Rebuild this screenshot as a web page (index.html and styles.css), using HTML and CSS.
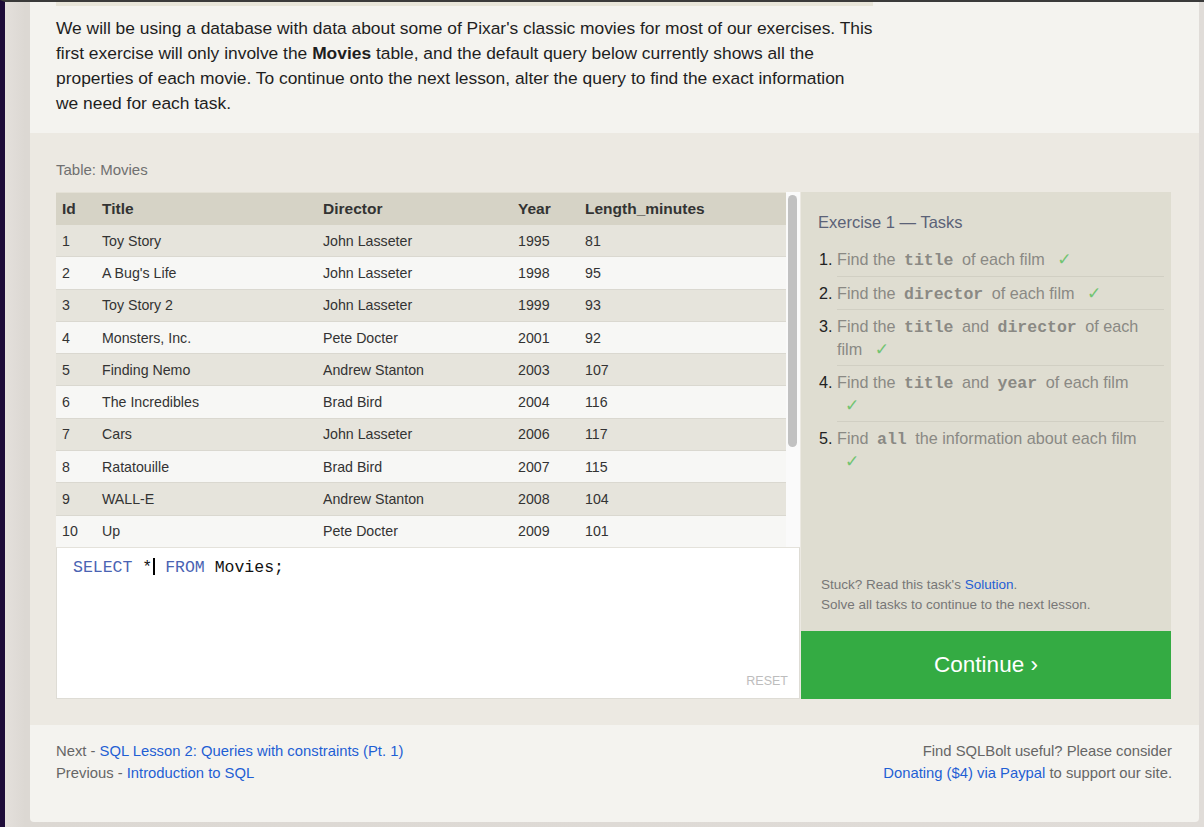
FILE: index.html
```html
<!DOCTYPE html>
<html lang="en">
<head>
<meta charset="utf-8">
<title>SQLBolt - Lesson 1</title>
<link rel="stylesheet" href="styles.css">
</head>
<body>
<div class="card">
  <section class="intro">
    <div class="strip"></div>
    <p class="lead">We will be using a database with data about some of Pixar's classic movies for most of our exercises. This<br>first exercise will only involve the <strong>Movies</strong> table, and the default query below currently shows all the<br>properties of each movie. To continue onto the next lesson, alter the query to find the exact information<br>we need for each task.</p>
  </section>

  <section class="exercise">
    <div class="table-label">Table: Movies</div>
    <div class="workspace">
      <div class="left-col">
        <div class="table-wrap">
          <div class="table-scroll">
            <table class="movies">
              <thead>
                <tr><th class="c-id">Id</th><th class="c-title">Title</th><th class="c-dir">Director</th><th class="c-year">Year</th><th class="c-len">Length_minutes</th></tr>
              </thead>
              <tbody>
                <tr><td>1</td><td>Toy Story</td><td>John Lasseter</td><td>1995</td><td>81</td></tr>
                <tr><td>2</td><td>A Bug's Life</td><td>John Lasseter</td><td>1998</td><td>95</td></tr>
                <tr><td>3</td><td>Toy Story 2</td><td>John Lasseter</td><td>1999</td><td>93</td></tr>
                <tr><td>4</td><td>Monsters, Inc.</td><td>Pete Docter</td><td>2001</td><td>92</td></tr>
                <tr><td>5</td><td>Finding Nemo</td><td>Andrew Stanton</td><td>2003</td><td>107</td></tr>
                <tr><td>6</td><td>The Incredibles</td><td>Brad Bird</td><td>2004</td><td>116</td></tr>
                <tr><td>7</td><td>Cars</td><td>John Lasseter</td><td>2006</td><td>117</td></tr>
                <tr><td>8</td><td>Ratatouille</td><td>Brad Bird</td><td>2007</td><td>115</td></tr>
                <tr><td>9</td><td>WALL-E</td><td>Andrew Stanton</td><td>2008</td><td>104</td></tr>
                <tr><td>10</td><td>Up</td><td>Pete Docter</td><td>2009</td><td>101</td></tr>
                <tr><td>11</td><td>Toy Story 3</td><td>Lee Unkrich</td><td>2010</td><td>103</td></tr>
                <tr><td>12</td><td>Cars 2</td><td>John Lasseter</td><td>2011</td><td>120</td></tr>
                <tr><td>13</td><td>Brave</td><td>Brenda Chapman</td><td>2012</td><td>102</td></tr>
                <tr><td>14</td><td>Monsters University</td><td>Dan Scanlon</td><td>2013</td><td>110</td></tr>
              </tbody>
            </table>
          </div>
          <div class="scrollbar"><div class="thumb"></div></div>
        </div>
        <div class="editor">
          <div class="code"><span class="kw">SELECT</span> *<span class="cursor"></span> <span class="kw">FROM</span> Movies;</div>
          <div class="reset">RESET</div>
        </div>
      </div>
      <div class="right-col">
        <div class="tasks">
          <h3 class="tasks-title">Exercise 1 — Tasks</h3>
          <ol class="task-list">
            <li>Find the <code>title</code> of each film <span class="check">✓</span></li>
            <li>Find the <code>director</code> of each film <span class="check">✓</span></li>
            <li>Find the <code>title</code> and <code>director</code> of each film <span class="check">✓</span></li>
            <li>Find the <code>title</code> and <code>year</code> of each film <span class="check">✓</span></li>
            <li>Find <code>all</code> the information about each film <span class="check">✓</span></li>
          </ol>
          <div class="stuck">Stuck? Read this task's <a href="#">Solution</a>.<br>Solve all tasks to continue to the next lesson.</div>
        </div>
        <a class="continue" href="#">Continue ›</a>
      </div>
    </div>
  </section>

  <footer class="foot">
    <div class="nav">
      <div>Next - <a href="#">SQL Lesson 2: Queries with constraints (Pt. 1)</a></div>
      <div>Previous - <a href="#">Introduction to SQL</a></div>
    </div>
    <div class="support">
      <div>Find SQLBolt useful? Please consider</div>
      <div><a href="#">Donating ($4) via Paypal</a> to support our site.</div>
    </div>
  </footer>
</div>
</body>
</html>
```

FILE: styles.css
```css
html, body {
  margin: 0;
  padding: 0;
}

body {
  min-height: 100vh;
  box-sizing: border-box;
  background: linear-gradient(to right, #e6e2de 0, #dcd8d3 25px, #e0dcd8 100%);
  border-left: 5px solid #1e0c39;
  border-top: 2px solid #3a3a3a;
  padding: 0 5px 5px 25px;
  font-family: "Liberation Sans", Arial, sans-serif;
  color: #222;
}

a {
  color: #1f5fd4;
  text-decoration: none;
}

.card {
  background: #f4f3ef;
  border-radius: 0 0 4px 4px;
  overflow: hidden;
}

/* intro */
.intro {
  padding: 0 26px 17px;
}

.strip {
  width: 817px;
  height: 4px;
  background: #e8e5d9;
  margin-bottom: 10px;
}

.lead {
  margin: 0;
  width: 860px;
  font-size: 17.4px;
  line-height: 25px;
  color: #1e1e1e;
}

/* exercise */
.exercise {
  background: #ece9e2;
  padding: 27px 28px 26px 26px;
}

.table-label {
  font-size: 15px;
  line-height: 20px;
  color: #707070;
  margin-bottom: 12px;
}

.workspace {
  display: flex;
  gap: 1px;
  height: 507px;
}

.left-col {
  width: 744px;
  display: flex;
  flex-direction: column;
}

.table-wrap {
  height: 355px;
  display: flex;
  background: #fafafa;
}

.table-scroll {
  width: 730px;
  overflow: hidden;
}

.movies {
  width: 730px;
  border-collapse: separate;
  border-spacing: 0;
  table-layout: fixed;
  font-size: 14.2px;
  color: #333;
}

.movies th {
  background: #d6d3c6;
  text-align: left;
  font-weight: bold;
  font-size: 15.5px;
  height: 32px;
  padding: 0 6px;
  border-top: 1px solid #e4e1d6;
  color: #333;
}

.movies td {
  height: 31.3px;
  padding: 0 6px;
  border-bottom: 1px solid #dad8d0;
}

.movies tbody tr:nth-child(odd) td {
  background: #e6e4dc;
}

.movies tbody tr:nth-child(even) td {
  background: #f7f7f5;
}

.c-id { width: 28px; }
.c-title { width: 209px; }
.c-dir { width: 183px; }
.c-year { width: 55px; }
.c-len { width: 195px; }

.scrollbar {
  width: 9px;
  padding: 3px 3px 0 2px;
  background: #fafafa;
}

.thumb {
  height: 252px;
  background: #c1c1c1;
  border-radius: 5px;
}

.editor {
  flex: 1;
  background: #fff;
  border: 1px solid #dedcd5;
  border-top: 1px solid #e4e2db;
  display: flex;
  flex-direction: column;
  padding: 10px 11px 8px 16px;
}

.code {
  flex: 1;
  font-family: "Liberation Mono", "Courier New", monospace;
  font-size: 16.5px;
  line-height: 20px;
  color: #111;
}

.kw {
  color: #4a63b3;
}

.cursor {
  display: inline-block;
  width: 2px;
  height: 17px;
  background: #000;
  vertical-align: -3px;
  margin-left: 1px;
}

.reset {
  align-self: flex-end;
  font-size: 12.5px;
  line-height: 18px;
  color: #bdbdbd;
}

.right-col {
  width: 371px;
  display: flex;
  flex-direction: column;
}

.tasks {
  flex: 1;
  background: #dfddd1;
  padding: 19px 7px 16px 17px;
  display: flex;
  flex-direction: column;
}

.tasks-title {
  margin: 0;
  font-size: 16.5px;
  font-weight: normal;
  line-height: 22px;
  color: #5b6277;
}

.task-list {
  margin: 10px 0 0;
  padding-left: 19px;
  font-size: 16.2px;
  line-height: 22.5px;
  color: #8a8984;
}

.task-list li {
  padding: 5px 12px 5px 0;
}

.task-list li:not(:last-child) {
  border-bottom: 1px solid #d1cfc3;
}

.task-list li::marker {
  color: #222;
}

.task-list code {
  font-family: "Liberation Mono", "Courier New", monospace;
  font-weight: bold;
  font-size: 16.5px;
  line-height: 1;
  color: #8a8984;
  margin: 0 4px;
}

.check {
  color: #72c472;
  font-family: "DejaVu Sans", sans-serif;
  font-size: 17px;
  line-height: 1;
  margin-left: 8px;
}

.stuck {
  margin-top: auto;
  padding-left: 3px;
  font-size: 13.5px;
  line-height: 20px;
  color: #777;
}

.continue {
  height: 68px;
  background: #34ab43;
  color: #fff;
  font-size: 22.5px;
  display: flex;
  align-items: center;
  justify-content: center;
}

/* footer */
.foot {
  display: flex;
  justify-content: space-between;
  padding: 15px 27px 38px 26px;
  font-size: 14.8px;
  line-height: 22px;
  color: #666;
}

.support {
  text-align: right;
}
```
